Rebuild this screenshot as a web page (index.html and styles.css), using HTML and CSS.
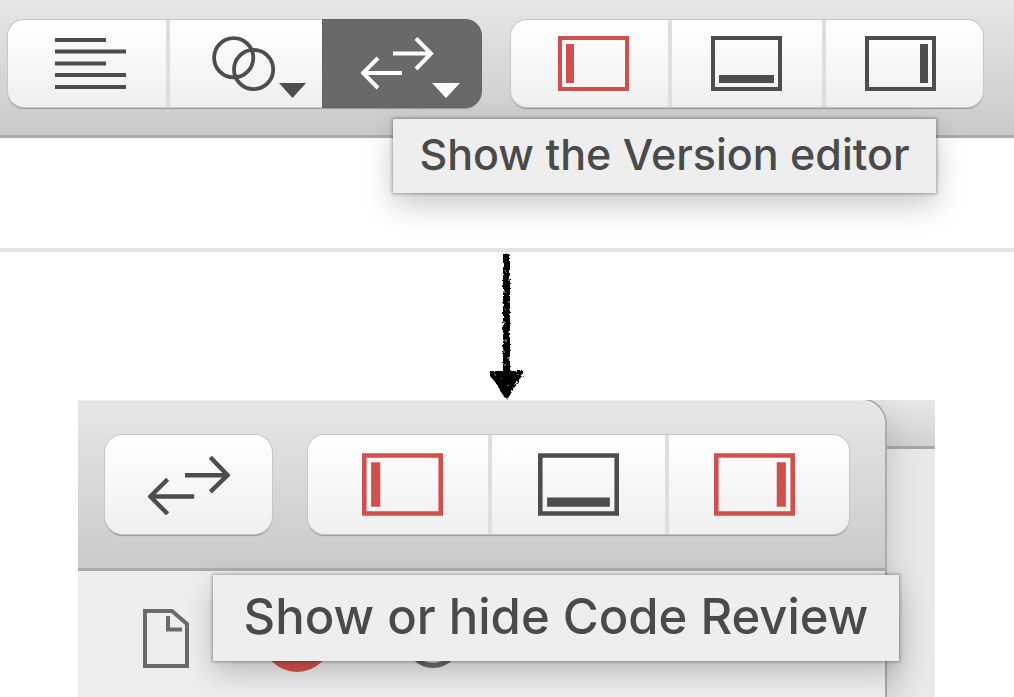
FILE: index.html
```html
<!DOCTYPE html>
<html lang="en">
<head>
<meta charset="utf-8">
<title>Version editor and Code Review</title>
<link rel="stylesheet" href="styles.css">
</head>
<body>
<svg class="symbols" aria-hidden="true">
  <symbol id="panel-left" viewBox="0 0 71 55"><path d="M2 2H69V53H2Z" fill="none" stroke="currentColor" stroke-width="4"/><path d="M8 8H16V47H8Z" fill="currentColor"/></symbol>
  <symbol id="panel-bottom" viewBox="0 0 71 55"><path d="M2 2H69V53H2Z" fill="none" stroke="currentColor" stroke-width="4"/><path d="M8 39H63V47H8Z" fill="currentColor"/></symbol>
  <symbol id="panel-right" viewBox="0 0 71 55"><path d="M2 2H69V53H2Z" fill="none" stroke="currentColor" stroke-width="4"/><path d="M55 8H63V47H55Z" fill="currentColor"/></symbol>
</svg>

<section class="before">
  <div class="toolbar">
    <div class="group modes">
      <button class="segment lead" aria-label="Standard editor">
        <svg width="71" height="51" viewBox="0 0 71 51"><path d="M0 2H51M0 13.500H71M0 25.500H51M0 37H71M0 49H71" stroke="currentColor" stroke-width="4"/></svg>
      </button>
      <button class="segment circles" aria-label="Assistant editor">
        <svg width="94" height="64" viewBox="0 0 94 64"><g fill="none" stroke="currentColor" stroke-width="3.800"><circle cx="21.700" cy="21.700" r="19.600"/><circle cx="41.600" cy="33.500" r="19.600"/></g><path d="M67 47H94L80.500 62Z" fill="currentColor"/></svg>
      </button>
      <button class="segment selected" aria-label="Version editor" aria-describedby="tip-version">
        <svg width="100" height="64" viewBox="0 0 100 64"><path d="M32 17.500H70M55 2.500L70 17.500L55 33M41 37H2M17 22L2 37L17 52" fill="none" stroke="currentColor" stroke-width="4"/><path d="M71 47H99L85 62Z" fill="currentColor"/></svg>
      </button>
    </div>
    <div class="group">
      <button class="segment lead red" aria-label="Navigator"><svg class="panel-icon"><use href="#panel-left"/></svg></button>
      <button class="segment" aria-label="Debug area"><svg class="panel-icon"><use href="#panel-bottom"/></svg></button>
      <button class="segment trail" aria-label="Inspectors"><svg class="panel-icon"><use href="#panel-right"/></svg></button>
    </div>
    <div class="tooltip tip-version" id="tip-version" role="tooltip">Show the Version editor</div>
  </div>
</section>

<div class="transition">
  <svg width="36" height="148" viewBox="0 0 36 148" aria-hidden="true">
    <defs><filter id="rough" x="-20%" y="-5%" width="140%" height="110%"><feTurbulence type="fractalNoise" baseFrequency="0.45" numOctaves="2" seed="4"/><feDisplacementMap in="SourceGraphic" scale="4"/></filter></defs>
    <g filter="url(#rough)"><path d="M14 3Q17 0 21 3L21 119H34L34 123L29 129L20 145Q17 148 15 145L7 131L1 124L1 119H14Z" fill="#000"/>
    <path d="M16 18v2M20 27v2M15 38v3M20 49v2M16 57v2M15 69v2M20 79v2M17 87v3M15 98v2M20 106v2M16 112v2M6 122v1M29 122v1M19 133v1M12 126v1" stroke="#bbb" stroke-width="1"/></g>
  </svg>
</div>

<section class="after">
  <div class="window">
    <div class="toolbar large">
      <button class="segment single" aria-label="Code Review" aria-describedby="tip-review">
        <svg width="82" height="60" viewBox="0 0 71 52"><path d="M32 17.500H69M54 2L69 17.500L54 32M40 36H2M17 21L2 36L17 51" fill="none" stroke="currentColor" stroke-width="3.800"/></svg>
      </button>
      <div class="group">
        <button class="segment lead red" aria-label="Navigator"><svg class="panel-icon"><use href="#panel-left"/></svg></button>
        <button class="segment" aria-label="Debug area"><svg class="panel-icon"><use href="#panel-bottom"/></svg></button>
        <button class="segment trail red" aria-label="Inspectors"><svg class="panel-icon"><use href="#panel-right"/></svg></button>
      </div>
      <div class="tooltip tip-review" id="tip-review" role="tooltip">Show or hide Code Review</div>
    </div>
    <div class="inspector">
      <svg width="46" height="59" viewBox="0 0 46 59"><path d="M2 2H29L44 15V57H2Z" fill="none" stroke="currentColor" stroke-width="4"/><path d="M25 7V20.500H39" fill="none" stroke="currentColor" stroke-width="4"/></svg>
      <svg class="badge" width="70" height="70" viewBox="0 0 70 70"><circle cx="35" cy="35" r="35" fill="#d9514e"/></svg>
      <svg width="56" height="56" viewBox="0 0 56 56"><circle cx="28" cy="28" r="25.500" fill="none" stroke="currentColor" stroke-width="5"/></svg>
    </div>
  </div>
</section>
</body>
</html>
```
FILE: styles.css
```css
* { box-sizing: border-box; }

body {
  margin: 0;
  height: 100vh;
  display: flex;
  flex-direction: column;
  overflow: hidden;
  background: #fff;
  color: #4a4a4a;
  font-family: Inter, "Liberation Sans", sans-serif;
}

svg { display: block; flex: none; }
.symbols { position: absolute; width: 0; height: 0; }

.before {
  padding-bottom: 110px;
  border-bottom: 4px solid #e5e5e5;
}

.toolbar {
  position: relative;
  display: flex;
  gap: 30px;
  padding: 20px 31px 28px 8px;
  background: linear-gradient(#e6e6e6, #cacaca);
  border-bottom: 3px solid #ababab;
}

.group {
  flex: 1;
  display: flex;
  border-radius: 16px;
  box-shadow: 0 0 0 1px #c6c6c6, 0 2px 1px #989898;
}

.segment {
  flex: 1;
  display: flex;
  align-items: center;
  justify-content: center;
  height: 87px;
  margin: 0;
  padding: 0;
  border: 0;
  border-right: 4px solid #dedede;
  background: linear-gradient(#fff, #f7f7f7 50%, #efefef);
  color: #4d4d4d;
  font: inherit;
}

.segment:first-child { border-radius: 16px 0 0 16px; }
.segment:last-child { border-right: 0; border-radius: 0 16px 16px 0; }
.lead { padding-left: 8px; }
.trail { padding-right: 8px; }
.red { color: #d0504e; }

.modes {
  display: grid;
  grid-template-columns: repeat(3, minmax(0, 1fr));
}

.modes .segment { border-right: 0; }

.modes .circles {
  padding: 8px 0 0 26px;
  border-left: 4px solid #dedede;
}

.selected {
  padding: 8px 0 0 18px;
  background: #696969;
  box-shadow: 0 0 0 1px #636363;
  color: #fff;
}

.panel-icon { width: 71px; height: 55px; }

.tooltip {
  position: absolute;
  z-index: 2;
  display: flex;
  align-items: center;
  justify-content: center;
  padding-bottom: 4px;
  background: #eee;
  font-weight: 500;
  white-space: nowrap;
  box-shadow: 0 0 3px 1px rgba(0, 0, 0, .3), 0 12px 30px rgba(0, 0, 0, .22);
}

.tip-version { top: 119px; left: 393px; width: 543px; height: 74px; font-size: 43px; }

.transition {
  display: flex;
  justify-content: center;
  height: 148px;
}

.after {
  flex: 1;
  display: flex;
  margin: 0 79px 0 78px;
  overflow: hidden;
  background: linear-gradient(#e8e8e8, #d2d2d2 46px, #a8a8a8 46px, #a8a8a8 49px, #e9e9e9 49px);
}

.window {
  flex: 1;
  display: flex;
  flex-direction: column;
  margin-right: 50px;
  border-radius: 0 24px 0 0;
  background: #eee;
  box-shadow: 0 0 0 2px #aaa, 0 12px 40px rgba(0, 0, 0, .2);
}

.large {
  gap: 36px;
  padding: 34px 36px 34px 27px;
  border-top: 1px solid #f0f0f0;
  border-radius: 0 24px 0 0;
}

.large .segment { height: 99px; }
.large .panel-icon { width: 81px; height: 63px; }

.large .single {
  flex: 0 0 167px;
  border: 0;
  border-radius: 18px;
  box-shadow: 0 0 0 1px #c6c6c6, 0 2px 1px #989898;
}

.tip-review { top: 174px; left: 135px; width: 686px; height: 86px; font-size: 49px; }

.inspector {
  display: flex;
  align-items: flex-end;
  gap: 73px;
  padding: 31px 65px 0;
  color: #6b6b6b;
}

.badge { margin-bottom: -4px; }
```
